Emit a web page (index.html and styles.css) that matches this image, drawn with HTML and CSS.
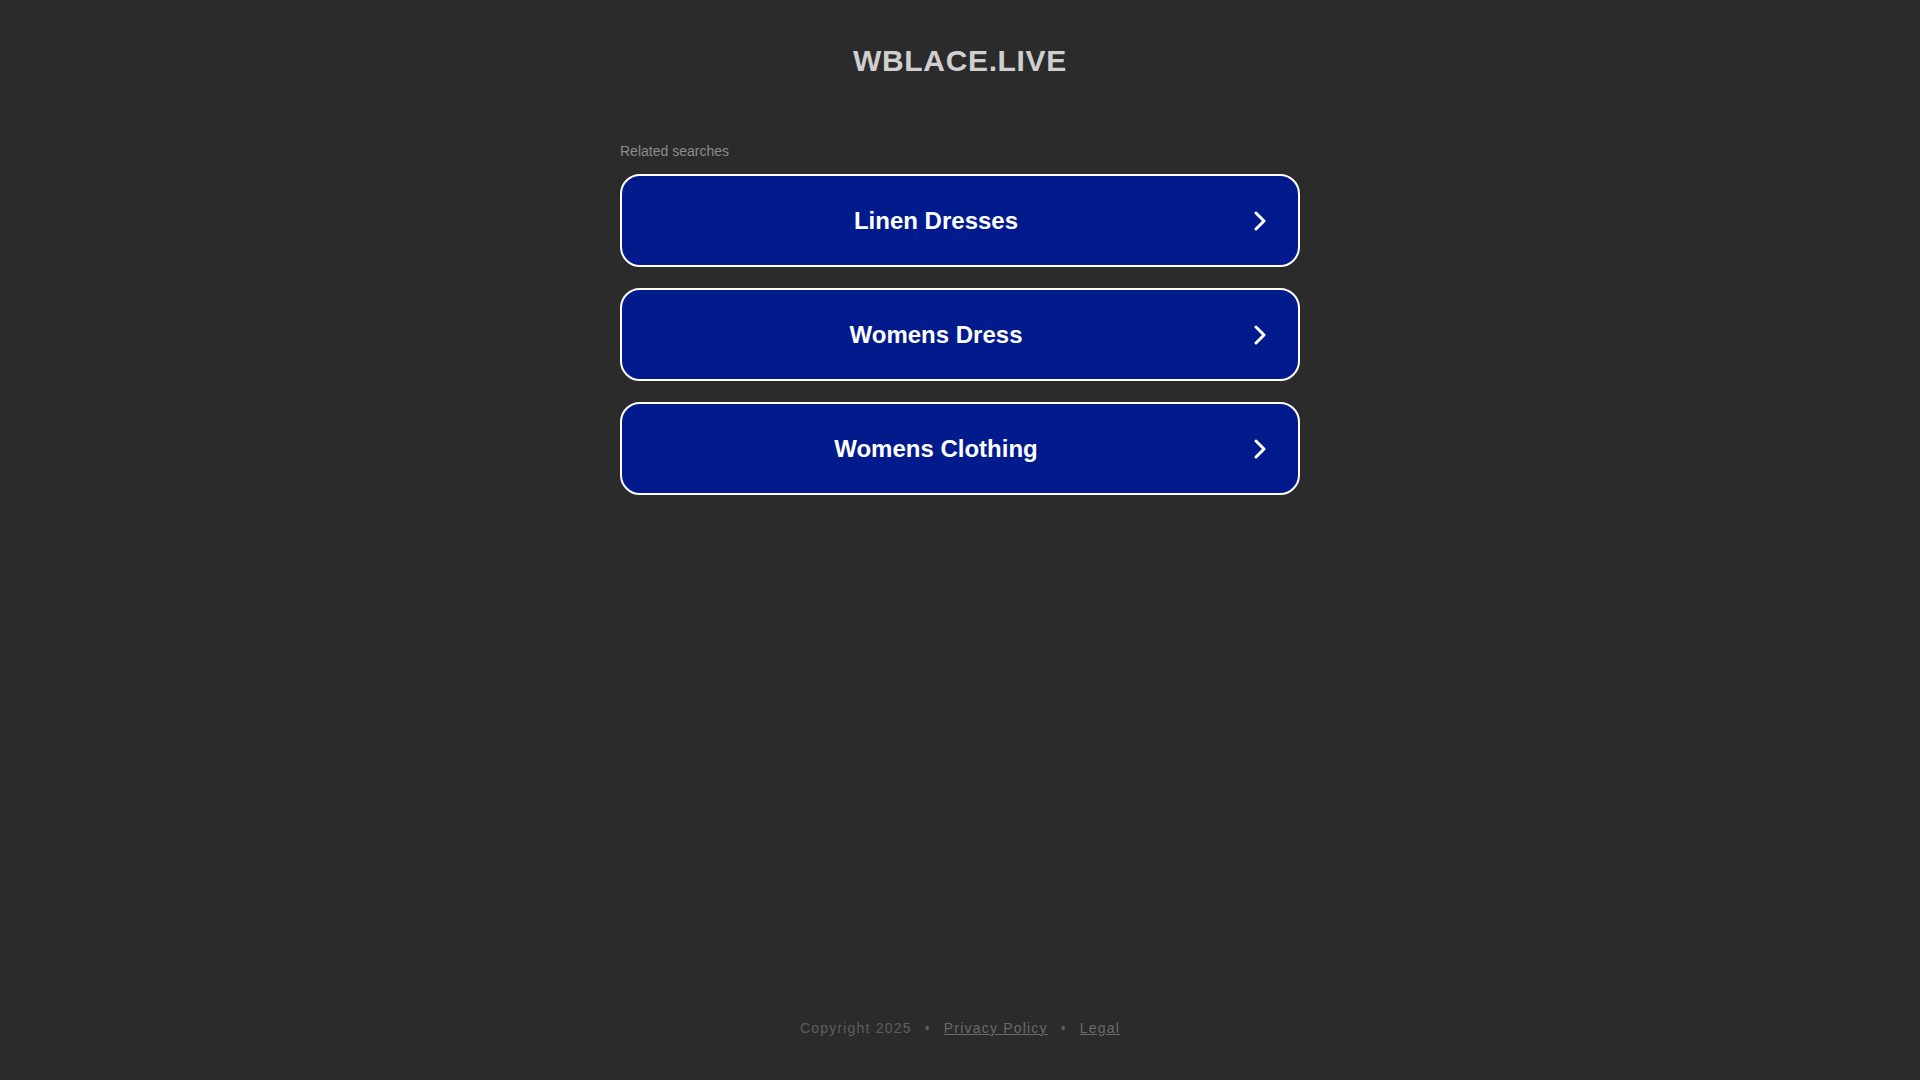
FILE: index.html
```html
<!DOCTYPE html>
<html lang="en">
<head>
<meta charset="utf-8">
<title>wblace.live</title>
<link rel="stylesheet" href="styles.css">
</head>
<body>
<div class="page">
  <header class="header">
    <h1 class="title">WBLACE.LIVE</h1>
  </header>
  <main class="content">
    <p class="related">Related searches</p>
    <ul class="links">
      <li><a class="link" href="#"><span class="label">Linen Dresses</span><svg class="chev" width="12" height="20" viewBox="0 0 12 20"><polyline points="2,2 10,10 2,18" fill="none" stroke="#fff" stroke-width="3" stroke-linecap="round" stroke-linejoin="round"/></svg></a></li>
      <li><a class="link" href="#"><span class="label">Womens Dress</span><svg class="chev" width="12" height="20" viewBox="0 0 12 20"><polyline points="2,2 10,10 2,18" fill="none" stroke="#fff" stroke-width="3" stroke-linecap="round" stroke-linejoin="round"/></svg></a></li>
      <li><a class="link" href="#"><span class="label">Womens Clothing</span><svg class="chev" width="12" height="20" viewBox="0 0 12 20"><polyline points="2,2 10,10 2,18" fill="none" stroke="#fff" stroke-width="3" stroke-linecap="round" stroke-linejoin="round"/></svg></a></li>
    </ul>
  </main>
  <footer class="footer">
    <span class="copy">Copyright 2025</span><span class="sep">•</span><a class="flink" href="#">Privacy Policy</a><span class="sep">•</span><a class="flink" href="#">Legal</a>
  </footer>
</div>
</body>
</html>
```

FILE: styles.css
```css
html, body {
  margin: 0;
  padding: 0;
  background: #2b2b2b;
}
body {
  font-family: "Liberation Sans", Arial, sans-serif;
}
.page {
  min-height: 100vh;
  display: flex;
  flex-direction: column;
}
.header {
  padding-top: 44px;
}
.title {
  margin: 0;
  text-align: center;
  font-size: 30px;
  line-height: 34px;
  font-weight: bold;
  letter-spacing: 0.65px;
  color: #cfcfcf;
}
.content {
  width: 680px;
  margin: 63px auto 0;
}
.related {
  margin: 0 0 13px;
  font-size: 14px;
  line-height: 20px;
  color: #8c8c8c;
}
.links {
  list-style: none;
  margin: 0;
  padding: 0;
  display: flex;
  flex-direction: column;
  gap: 21px;
}
.link {
  box-sizing: border-box;
  height: 93px;
  display: flex;
  align-items: center;
  border: 2px solid #ffffff;
  border-radius: 20px;
  background: #011a8c;
  text-decoration: none;
  color: #ffffff;
}
.label {
  flex: 1;
  text-align: center;
  font-size: 24px;
  font-weight: bold;
}
.chev {
  display: block;
  margin: 0 32px 0 4px;
}
.footer {
  margin-top: auto;
  padding-bottom: 42px;
  text-align: center;
  font-size: 14px;
  line-height: 20px;
  letter-spacing: 1.2px;
  color: #5e5e5e;
}
.sep {
  margin: 0 13px;
}
.flink {
  color: #6a6a6a;
  text-decoration: underline;
}
```
